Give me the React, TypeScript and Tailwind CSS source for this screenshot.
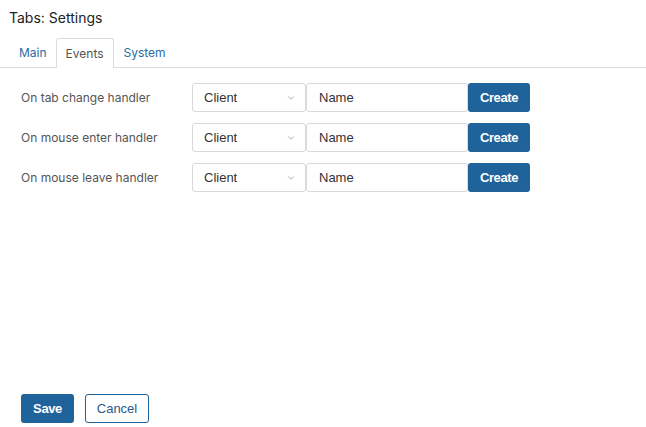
import { ChevronDown } from "lucide-react";

const rows = [
  "On tab change handler",
  "On mouse enter handler",
  "On mouse leave handler",
];

const ui = { fontFamily: "Inter, 'Liberation Sans', sans-serif" };
const ctl = { fontFamily: "'Liberation Sans', Arial, sans-serif" };

function HandlerRow({ label }: { label: string }) {
  return (
    <div className="flex h-[29px] items-center">
      <span className="w-[171px] text-[12px] text-[#555]" style={ui}>
        {label}
      </span>
      <div
        className="flex h-[29px] w-[114px] items-center justify-between rounded-[3px] border border-[#d9d9d9] bg-white pl-[11px] pr-[9px] text-[13px] text-[#333]"
        style={ctl}
      >
        <span>Client</span>
        <ChevronDown className="h-[10px] w-[10px] text-[#777]" strokeWidth={1.5} />
      </div>
      <div
        className="flex h-[29px] w-[162px] items-center rounded-[3px] border border-[#d9d9d9] bg-white pl-[12px] text-[13px] text-[#333]"
        style={ctl}
      >
        Name
      </div>
      <button
        className="flex h-[29px] w-[62px] items-center justify-center rounded-[3px] bg-[#20639b] text-[13px] font-bold tracking-[-0.4px] text-white"
        style={ctl}
      >
        Create
      </button>
    </div>
  );
}

export default function App() {
  return (
    <div className="flex h-[427px] w-[646px] flex-col bg-white">
      <h1 className="pl-[9px] pt-[8px] text-[14px] leading-[20px] text-[#222]" style={ui}>
        Tabs: Settings
      </h1>
      <div className="mt-[10px] flex h-[30px] border-b border-[#dcdcdc] pl-[10px] text-[12px]" style={ui}>
        <div className="flex items-center px-[9px] text-[#2a6ca3]">Main</div>
        <div className="-mb-px flex items-center rounded-t-[3px] border border-b-0 border-[#dcdcdc] bg-white px-[9px] text-[#555]">
          Events
        </div>
        <div className="flex items-center px-[10px] text-[#2a6ca3]">System</div>
      </div>
      <div className="flex flex-col gap-[11px] pl-[21px] pt-[15px]">
        {rows.map((r) => (
          <HandlerRow key={r} label={r} />
        ))}
      </div>
      <div className="mt-auto flex gap-[11px] pb-[4px] pl-[21px]">
        <button
          className="h-[29px] w-[53px] rounded-[3px] bg-[#20639b] text-[13px] font-bold tracking-[-0.4px] text-white"
          style={ctl}
        >
          Save
        </button>
        <button
          className="h-[29px] w-[64px] rounded-[3px] border border-[#20639b] bg-white text-[13px] text-[#2a5a8a]"
          style={ctl}
        >
          Cancel
        </button>
      </div>
    </div>
  );
}
